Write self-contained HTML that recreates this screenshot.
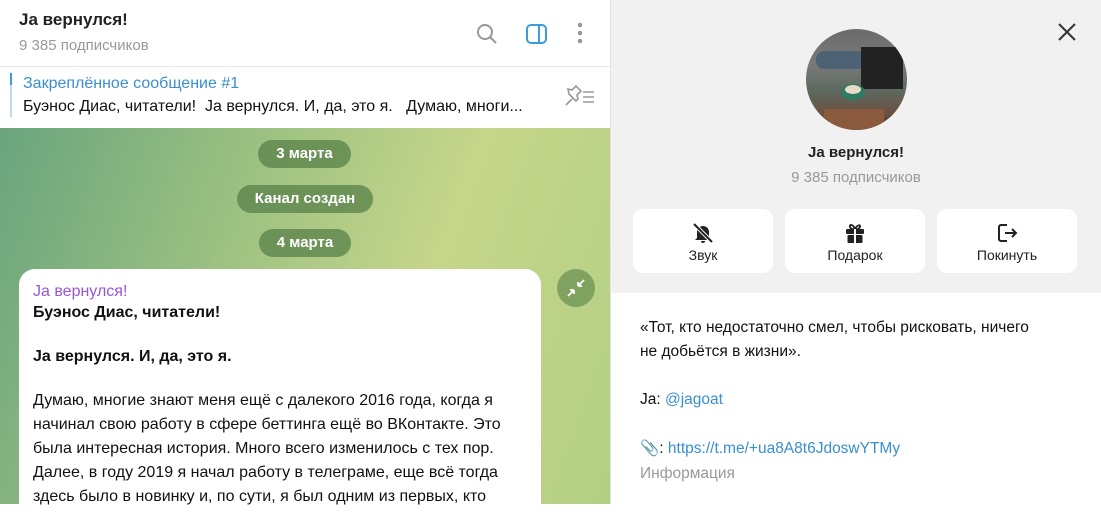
<!DOCTYPE html>
<html><head><meta charset="utf-8"><style>
*{margin:0;padding:0;box-sizing:border-box}
body{width:1101px;height:504px;overflow:hidden;font-family:"Liberation Sans","DejaVu Sans",sans-serif;position:relative;background:#fff;color:#000}
.a{position:absolute;white-space:nowrap}
#chat{position:absolute;left:0;top:128px;width:610px;height:376px;background:linear-gradient(110deg,#6aa47e 0%,#94bd80 30%,#c6d68a 65%,#b2cf84 100%)}
.pill{position:absolute;height:28px;border-radius:14px;background:rgba(88,128,72,.75);color:#fff;font-size:15px;font-weight:bold;line-height:28px;text-align:center}
.btn{position:absolute;top:209px;width:140px;height:64px;background:#fff;border-radius:10px;text-align:center;font-size:14px;color:#222}
.btn svg{position:absolute;left:58px;top:12px}
.btn span{position:absolute;left:0;right:0;top:38px}
.m{font-size:16px;color:#111}
</style></head><body>
<div class="a" style="left:19px;top:10px;font-size:17px;font-weight:bold;color:#222">Ja вернулся!</div>
<div class="a" style="left:19px;top:37px;font-size:15px;color:#999">9 385 подписчиков</div>
<svg class="a" style="left:475px;top:22px" width="24" height="24" viewBox="0 0 24 24" fill="none" stroke="#999" stroke-width="2"><circle cx="10" cy="10" r="7"/><path d="M15 15l6 6"/></svg>
<svg class="a" style="left:525px;top:22px" width="24" height="24" viewBox="0 0 24 24" fill="none" stroke="#3a9be0" stroke-width="2"><rect x="2" y="3" width="19" height="18" rx="4"/><path d="M14 3v18"/></svg>
<svg class="a" style="left:574px;top:22px" width="12" height="24" viewBox="0 0 12 24" fill="#999"><circle cx="6" cy="3" r="2.3"/><circle cx="6" cy="11" r="2.3"/><circle cx="6" cy="19" r="2.3"/></svg>
<div class="a" style="left:0;top:66px;width:610px;height:1px;background:#e6e6e6"></div>
<div class="a" style="left:10px;top:73px;width:2px;height:44px;background:#bcdcf4"></div>
<div class="a" style="left:10px;top:73px;width:2px;height:12px;background:#3a9be0"></div>
<div class="a" style="left:23px;top:75px;font-size:16px;color:#3a8fd0">Закреплённое сообщение #1</div>
<div class="a" style="left:23px;top:98px;font-size:16px;color:#111">Буэнос Диас, читатели!&nbsp; Ja вернулся. И, да, это я.&nbsp;&nbsp; Думаю, многи...</div>
<svg class="a" style="left:563px;top:85px" width="34" height="22" viewBox="0 0 34 22" fill="none" stroke="#999" stroke-width="1.6"><path d="M3 20l6-6M6 9l7 7 2-2-1-4 4-4-5-5-4 4-4-1z"/><path d="M20 7h11M20 12h11M20 17h11"/></svg>
<div id="chat"></div>
<div class="pill" style="left:258px;top:140px;width:93px">3 марта</div>
<div class="pill" style="left:237px;top:185px;width:136px">Канал создан</div>
<div class="pill" style="left:259px;top:229px;width:92px">4 марта</div>
<div class="a" style="left:19px;top:269px;width:522px;height:260px;background:#fff;border-radius:16px"></div>
<div class="a" style="left:557px;top:269px;width:38px;height:38px;border-radius:50%;background:rgba(90,130,70,.6)"></div>
<svg class="a" style="left:565px;top:277px" width="22" height="22" viewBox="0 0 22 22" fill="none" stroke="#fff" stroke-width="1.8"><path d="M13 9l6-6M13 9h4M13 9V5M9 13l-6 6M9 13H5M9 13v4"/></svg>
<div class="a" style="left:33px;top:283px;font-size:16px;color:#9a55d6">Ja вернулся!</div>
<div class="a m" style="left:33px;top:304px;font-weight:bold">Буэнос Диас, читатели!</div>
<div class="a m" style="left:33px;top:348px;font-weight:bold">Ja вернулся. И, да, это я.</div>
<div class="a m" style="left:33px;top:392px">Думаю, многие знают меня ещё с далекого 2016 года, когда я</div>
<div class="a m" style="left:33px;top:416px">начинал свою работу в сфере беттинга ещё во ВКонтакте. Это</div>
<div class="a m" style="left:33px;top:440px">была интересная история. Много всего изменилось с тех пор.</div>
<div class="a m" style="left:33px;top:464px">Далее, в году 2019 я начал работу в телеграме, еще всё тогда</div>
<div class="a m" style="left:33px;top:488px">здесь было в новинку и, по сути, я был одним из первых, кто</div>
<div class="a" style="left:610px;top:0;width:491px;height:293px;background:#f1f1f1;border-left:1px solid #e2e2e2"></div>
<div class="a" style="left:610px;top:293px;width:491px;height:211px;background:#fff;border-left:1px solid #e2e2e2"></div>
<div class="a" style="left:806px;top:29px;width:101px;height:101px;border-radius:50%;overflow:hidden;background:linear-gradient(180deg,#6b6b6b 0%,#7a7a7a 35%,#5d6a60 60%,#6a5040 85%,#333 100%)">
<div class="a" style="left:10px;top:22px;width:50px;height:18px;border-radius:8px;background:#4d6274"></div>
<div class="a" style="left:55px;top:18px;width:42px;height:42px;background:#222"></div>
<div class="a" style="left:35px;top:55px;width:24px;height:16px;border-radius:50%;background:#2e7a62"></div>
<div class="a" style="left:39px;top:56px;width:16px;height:9px;border-radius:50%;background:#e8dcc8"></div>
<div class="a" style="left:18px;top:80px;width:60px;height:25px;background:#8b5a3c"></div>
</div>
<svg class="a" style="left:1057px;top:22px" width="20" height="20" viewBox="0 0 20 20" stroke="#333" stroke-width="2"><path d="M2 2l16 16M18 2L2 18"/></svg>
<div class="a" style="left:611px;top:144px;width:490px;text-align:center;font-size:15px;font-weight:bold;color:#222">Ja вернулся!</div>
<div class="a" style="left:611px;top:169px;width:490px;text-align:center;font-size:15px;color:#999">9 385 подписчиков</div>
<div class="btn" style="left:633px"><svg width="24" height="24" viewBox="0 0 24 24"><path d="M6 17V11a6 6 0 0 1 12 0v6l2 2H4z" fill="#222"/><path d="M10 20a2 2 0 0 0 4 0" fill="#222"/><path d="M3 3l18 18" stroke="#fff" stroke-width="4"/><path d="M3 3l18 18" stroke="#222" stroke-width="2"/></svg><span>Звук</span></div>
<div class="btn" style="left:785px"><svg width="24" height="24" viewBox="0 0 24 24" fill="#222"><rect x="3" y="8" width="18" height="5" rx="1"/><rect x="4.5" y="14" width="15" height="8" rx="1"/><path d="M12 8C10 3 6 3 7 6s5 2 5 2c0 0 4 1 5-2s-3-2-5 2z" fill="none" stroke="#222" stroke-width="1.8"/><rect x="11" y="8" width="2" height="14" fill="#fff"/></svg><span>Подарок</span></div>
<div class="btn" style="left:937px"><svg width="24" height="24" viewBox="0 0 24 24" fill="none" stroke="#222" stroke-width="2"><path d="M12 4H6a2 2 0 0 0-2 2v12a2 2 0 0 0 2 2h6M10 12h11M17 8l4 4-4 4"/></svg><span>Покинуть</span></div>
<div class="a m" style="left:640px;top:319px;font-size:15.5px">«Тот, кто недостаточно смел, чтобы рисковать, ничего</div>
<div class="a m" style="left:640px;top:343px;font-size:15.5px">не добьётся в жизни».</div>
<div class="a m" style="left:640px;top:391px;font-size:15.5px">Ja: <span style="color:#3a8fd0">@jagoat</span></div>
<div class="a m" style="left:640px;top:439px;font-size:15.5px">📎: <span style="color:#3a8fd0">https://t.me/+ua8A8t6JdoswYTMy</span></div>
<div class="a" style="left:640px;top:465px;font-size:15.5px;color:#999">Информация</div>
</body></html>
